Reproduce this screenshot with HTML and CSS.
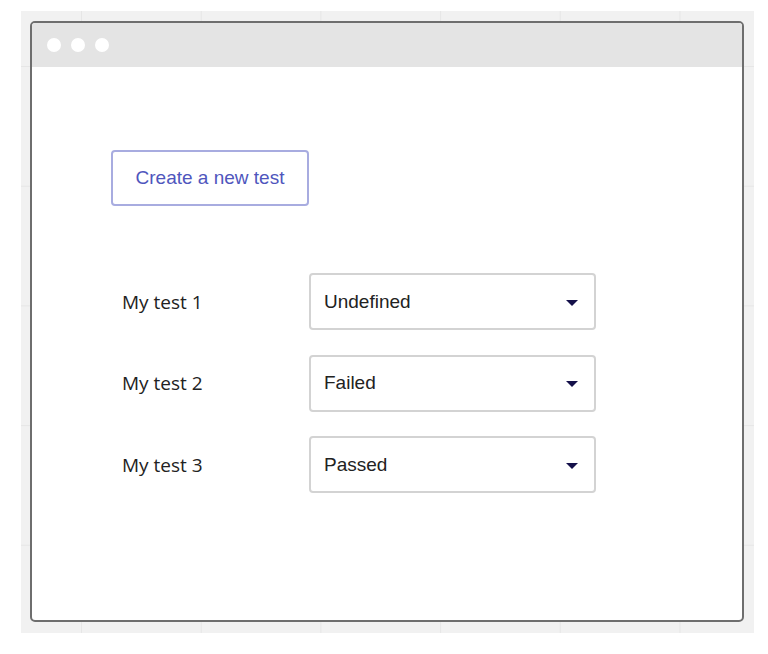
FILE: index.html
```html
<!DOCTYPE html>
<html>
<head>
<meta charset="utf-8">
<link rel="stylesheet" href="styles.css">
</head>
<body>
<div class="canvas">
  <div class="window">
    <div class="titlebar">
      <span class="dot"></span><span class="dot"></span><span class="dot"></span>
    </div>
    <div class="content">
      <button class="create-btn">Create a new test</button>
      <div class="tests">
        <div class="test-row">
          <span class="test-label">My test 1</span>
          <div class="select"><span>Undefined</span><span class="caret"></span></div>
        </div>
        <div class="test-row">
          <span class="test-label">My test 2</span>
          <div class="select"><span>Failed</span><span class="caret"></span></div>
        </div>
        <div class="test-row">
          <span class="test-label">My test 3</span>
          <div class="select"><span>Passed</span><span class="caret"></span></div>
        </div>
      </div>
    </div>
  </div>
</div>
</body>
</html>
```
FILE: styles.css
```css
* { box-sizing: border-box; }
html, body { margin: 0; padding: 0; background: #ffffff; }
body { padding: 11px 0 0 21px; }

.canvas {
  width: 733px;
  height: 622px;
  padding: 10px 0 0 9px;
  background-color: #f1f1f1;
  background-image:
    linear-gradient(to right, #e6e6e6 1px, transparent 1px),
    linear-gradient(to bottom, #e6e6e6 1px, transparent 1px);
  background-size: 119.7px 119.7px;
  background-position: 60px 55px;
}

.window {
  width: 714px;
  height: 601px;
  border: 2px solid #6e6e6e;
  border-radius: 5px;
  background: #ffffff;
  overflow: hidden;
}

.titlebar {
  height: 44px;
  background: #e4e4e4;
  display: flex;
  align-items: center;
  gap: 10px;
  padding-left: 15px;
}

.dot {
  width: 14px;
  height: 14px;
  border-radius: 50%;
  background: #ffffff;
}

.content {
  padding: 83px 0 0 79px;
}

.create-btn {
  display: block;
  height: 56px;
  width: 198px;
  padding: 0;
  border: 2px solid #a8ace0;
  border-radius: 4px;
  background: #ffffff;
  color: #4f56bd;
  font-family: "Liberation Sans", Arial, sans-serif;
  font-size: 19px;
}

.tests {
  margin-top: 67px;
  padding-left: 11px;
  display: flex;
  flex-direction: column;
  gap: 24.5px;
}

.test-row {
  display: flex;
  align-items: center;
}

.test-label {
  width: 187px;
  font-family: "Open Sans", sans-serif;
  font-size: 19px;
  color: #222222;
}

.select {
  width: 287px;
  height: 57px;
  border: 2px solid #d3d3d3;
  border-radius: 4px;
  display: flex;
  align-items: center;
  justify-content: space-between;
  padding: 0 16px 0 13px;
  font-family: "Liberation Sans", Arial, sans-serif;
  font-size: 19px;
  color: #222222;
}

.caret {
  width: 0;
  height: 0;
  border-left: 6px solid transparent;
  border-right: 6px solid transparent;
  border-top: 6px solid #14104a;
  margin-top: 2px;
}
```
